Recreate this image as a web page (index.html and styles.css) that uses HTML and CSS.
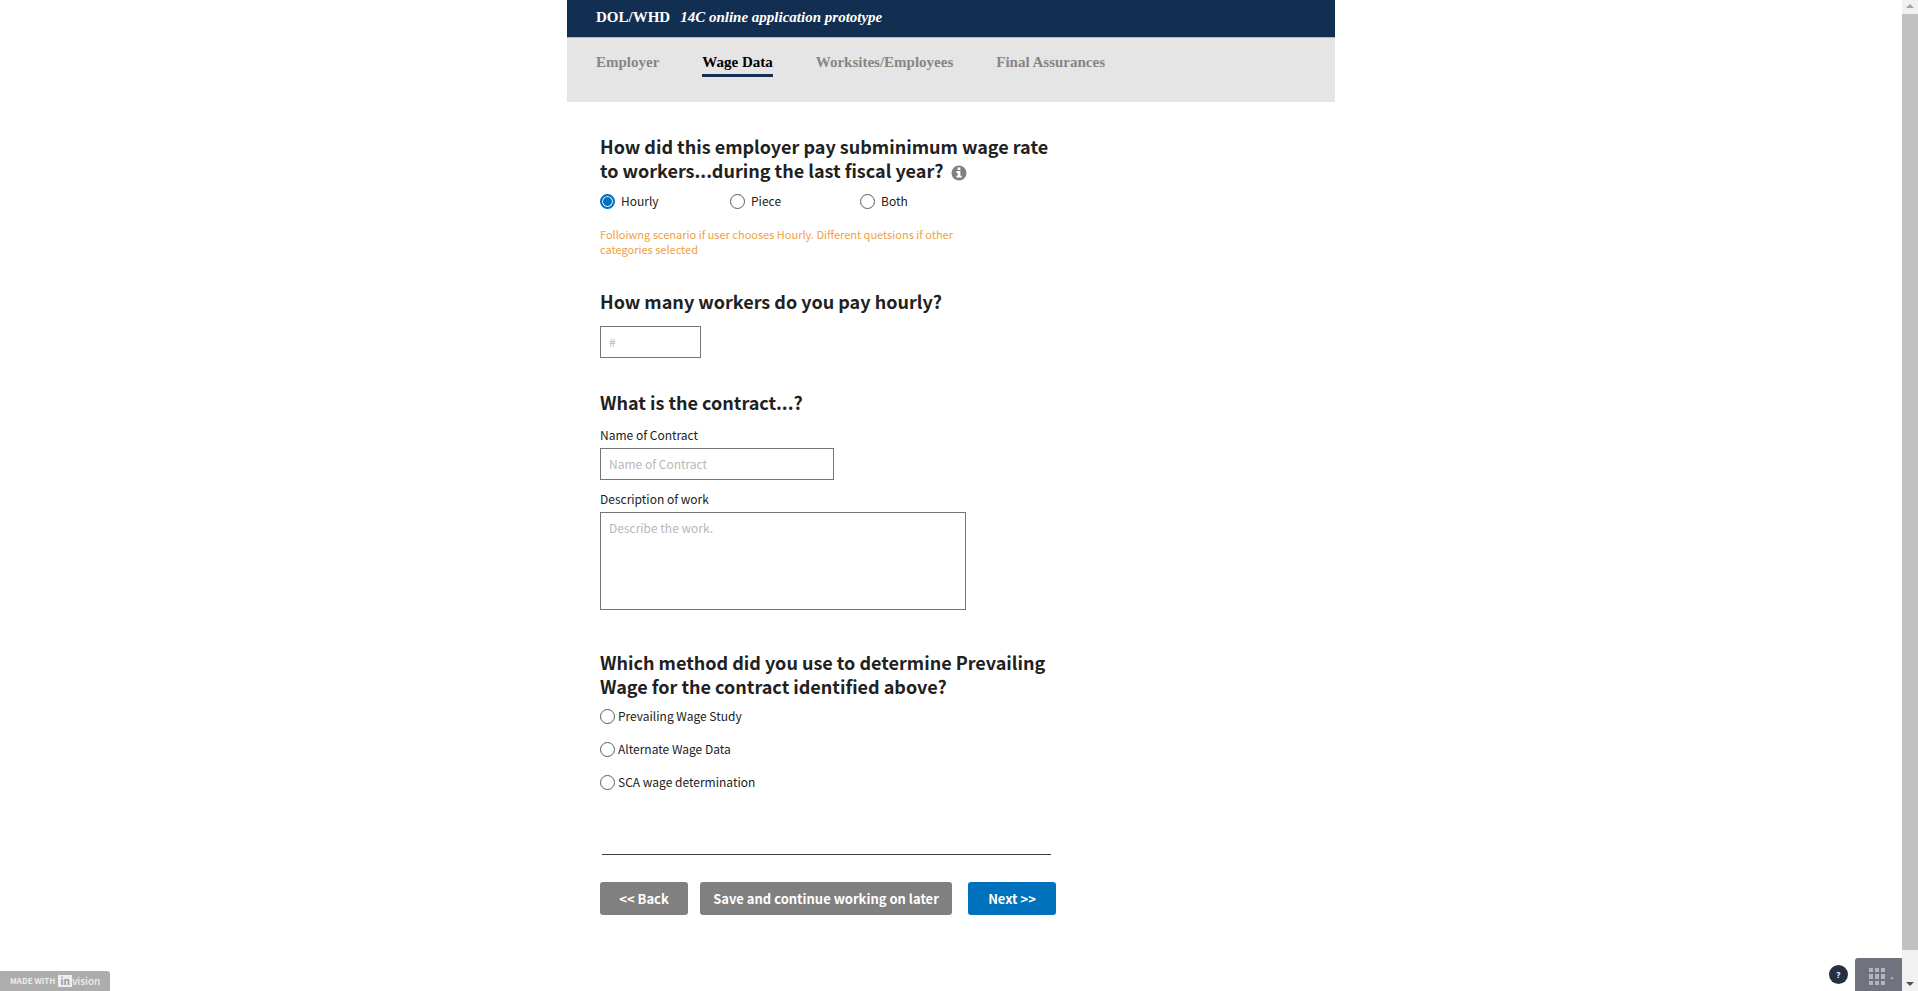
FILE: index.html
```
<!DOCTYPE html>
<html lang="en">
<head>
<meta charset="utf-8">
<title>14C online application prototype</title>
<link rel="stylesheet" href="styles.css">
</head>
<body>
<div class="viewport">
  <div class="page">
    <header class="banner">
      <span class="agency">DOL/WHD</span>
      <em class="product">14C online application prototype</em>
    </header>
    <nav class="tabs">
      <a class="tab" href="#employer">Employer</a>
      <a class="tab tab-active" href="#wage" aria-current="page">Wage Data</a>
      <a class="tab" href="#worksites">Worksites/Employees</a>
      <a class="tab" href="#final">Final Assurances</a>
    </nav>
    <form class="form">
      <section class="question">
        <h2 class="title" id="q-pay">How did this employer pay subminimum wage rate to workers...during the last fiscal year?
          <svg class="info" viewBox="0 0 16 16" role="img" aria-label="More information"><circle cx="8" cy="8" r="7.5" fill="#808080"/><path d="M6.6 2.6h2.8v2.3H6.6zM5.4 6.1h4v4.7h1.3v1.8H5.4v-1.8h1.3V7.9H5.4z" fill="#fff"/></svg>
        </h2>
        <div class="choices-row" role="radiogroup" aria-labelledby="q-pay">
          <label class="choice"><input class="radio" type="radio" name="pay" checked>Hourly</label>
          <label class="choice"><input class="radio" type="radio" name="pay">Piece</label>
          <label class="choice"><input class="radio" type="radio" name="pay">Both</label>
        </div>
        <p class="hint">Folloiwng scenario if user chooses Hourly. Different quetsions if other categories selected</p>
      </section>

      <section class="question workers">
        <h2 class="title"><label for="workers">How many workers do you pay hourly?</label></h2>
        <input class="field field-number" id="workers" type="text" placeholder="#">
      </section>

      <section class="question contract">
        <h2 class="title">What is the contract...?</h2>
        <label class="caption" for="contract-name">Name of Contract</label>
        <input class="field field-name" id="contract-name" type="text" placeholder="Name of Contract">
        <label class="caption caption-next" for="contract-work">Description of work</label>
        <textarea class="field field-work" id="contract-work" placeholder="Describe the work."></textarea>
      </section>

      <section class="question method">
        <h2 class="title" id="q-method">Which method did you use to determine Prevailing Wage for the contract identified above?</h2>
        <div class="choices-column" role="radiogroup" aria-labelledby="q-method">
          <label class="choice choice-tight"><input class="radio" type="radio" name="method">Prevailing Wage Study</label>
          <label class="choice choice-tight"><input class="radio" type="radio" name="method">Alternate Wage Data</label>
          <label class="choice choice-tight"><input class="radio" type="radio" name="method">SCA wage determination</label>
        </div>
      </section>

      <hr class="rule">
      <div class="actions">
        <button class="button" type="button">&lt;&lt; Back</button>
        <button class="button button-save" type="button">Save and continue working on later</button>
        <button class="button button-next" type="submit">Next &gt;&gt;</button>
      </div>
    </form>
  </div>

  <a class="badge" href="#invision">MADE WITH <span class="logo"><span class="logo-in">in</span>vision</span></a>
  <div class="dock">
    <button class="help" type="button" aria-label="Help">?</button>
    <button class="grid-button" type="button" aria-label="Screens">
      <svg class="grid-icon" viewBox="0 0 26 17"><g fill="#b3b5bb"><path d="M0 0h4v4H0zM6 0h4v4H6zM12 0h4v4h-4zM0 6h4v5H0zM6 6h4v5H6zM12 6h4v5h-4zM0 13h4v4H0zM6 13h4v4H6zM12 13h4v4h-4z"/><path d="M21 11l2-2.500 2 2.500z"/></g></svg>
    </button>
  </div>
</div>
<div class="scrollbar" aria-hidden="true">
  <svg class="arrow" viewBox="0 0 16 14"><path d="M4 8l4-4 4 4z" fill="#a3a3a3"/></svg>
  <div class="thumb"></div>
  <svg class="arrow arrow-down" viewBox="0 0 16 14"><path d="M4 5l4 4 4-4z" fill="#505050"/></svg>
</div>
</body>
</html>
```
FILE: styles.css
```
* {
  box-sizing: border-box;
}

body {
  margin: 0;
  display: flex;
  min-height: 100vh;
  background: #fff;
  color: #212121;
  font-family: "Noto Sans CJK SC", "Noto Sans", sans-serif;
  font-size: 12px;
  line-height: 16px;
}

.viewport {
  position: relative;
  flex: 1;
}

.page {
  max-width: 768px;
  margin: 0 auto;
}

.banner {
  display: flex;
  gap: 10px;
  padding: 7px 29px 10px;
  background: #122e51;
  border-bottom: 1px solid #a9b8cf;
  color: #fff;
  font-family: "Liberation Serif", serif;
  font-size: 15px;
  font-weight: 700;
  line-height: 20px;
}

.tabs {
  display: flex;
  gap: 43px;
  padding: 14px 29px 25px;
  background: #e5e5e5;
  font-family: "Liberation Serif", serif;
  font-size: 15px;
  font-weight: 700;
  line-height: 20px;
}

.tab {
  padding-bottom: 2px;
  border-bottom: 3px solid transparent;
  color: #858585;
  text-decoration: none;
}

.tab-active {
  border-color: #122e51;
  color: #000;
}

.form {
  max-width: 489px;
  padding: 32px 0 0 33px;
}

.title {
  margin: 0;
  font-size: 18px;
  font-weight: 700;
  line-height: 24px;
}

.info {
  width: 16px;
  height: 16px;
  margin-left: 3px;
  vertical-align: -3px;
}

.choices-row {
  display: grid;
  grid-template-columns: repeat(3, 130px);
  margin: 11px 0 18px;
}

.choice {
  display: flex;
  align-items: center;
  gap: 6px;
}

.choice-tight {
  gap: 3px;
}

.radio {
  appearance: none;
  width: 15px;
  height: 15px;
  margin: 0;
  border: 1px solid #5b5b5b;
  border-radius: 50%;
  background: #fff;
}

.radio:checked {
  border: 2px solid #0071bc;
  background: #0071bc;
  box-shadow: inset 0 0 0 1px #fff;
}

.hint {
  max-width: 380px;
  margin: 0;
  color: #f0a044;
  font-size: 11px;
  line-height: 15px;
}

.workers {
  margin-top: 32px;
}

.field {
  display: block;
  border: 1px solid #757575;
  border-radius: 0;
  padding: 7px 8px;
  background: #fff;
  font: inherit;
}

.field::placeholder {
  color: #b8b8b8;
}

.field-number {
  width: 101px;
  margin-top: 13px;
}

.contract {
  margin-top: 32px;
}

.caption {
  display: block;
  margin: 13px 0 5px;
}

.caption-next {
  margin-top: 11px;
}

.field-name {
  width: 234px;
}

.field-work {
  width: 366px;
  height: 98px;
  resize: none;
}

.method {
  margin-top: 40px;
}

.choices-column {
  display: grid;
  gap: 17px;
  margin-top: 10px;
}

.rule {
  height: 1px;
  margin: 64px 5px 27px 2px;
  border: 0;
  background: #3d3d3d;
}

.actions {
  display: flex;
  gap: 12px;
}

.button {
  flex: 0 0 88px;
  height: 33px;
  padding: 0;
  border: 0;
  border-radius: 3px;
  background: #808080;
  color: #fff;
  font: 700 13px/16px "Noto Sans CJK SC", "Noto Sans", sans-serif;
}

.button-save {
  flex: 1;
}

.button-next {
  margin-left: 4px;
  background: #0071bc;
}

.badge {
  position: absolute;
  left: 0;
  bottom: 0;
  display: flex;
  align-items: center;
  gap: 3px;
  height: 20px;
  padding: 0 10px;
  border-radius: 0 3px 0 0;
  background: #adadad;
  color: #eee;
  font-size: 8px;
  font-weight: 700;
  text-decoration: none;
}

.logo {
  display: flex;
  align-items: center;
  font-size: 10px;
  font-weight: 500;
  line-height: 12px;
}

.logo-in {
  padding: 0 2px;
  background: #eee;
  color: #999;
  font-weight: 700;
}

.dock {
  position: absolute;
  right: 0;
  bottom: 0;
  display: flex;
  align-items: center;
  gap: 7px;
}

.help {
  width: 19px;
  height: 19px;
  padding: 0;
  border: 0;
  border-radius: 50%;
  background: #273142;
  color: #fff;
  font: 700 8px/16px "Noto Sans", sans-serif;
}

.grid-button {
  display: flex;
  align-items: center;
  width: 47px;
  height: 33px;
  padding: 3px 0 0 14px;
  border: 0;
  border-radius: 3px 0 0 0;
  background: #70737e;
}

.grid-icon {
  width: 26px;
  height: 17px;
}

.scrollbar {
  display: flex;
  flex-direction: column;
  flex: 0 0 16px;
  background: #f1f1f1;
}

.arrow {
  width: 16px;
  height: 14px;
}

.arrow-down {
  margin-top: auto;
}

.thumb {
  flex: 0 0 94.500%;
  background: #c1c1c1;
}
```
